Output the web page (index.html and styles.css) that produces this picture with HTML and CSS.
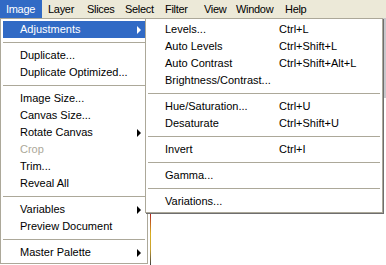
FILE: index.html
```html
<!DOCTYPE html>
<html lang="en">

<head>
  <meta charset="UTF-8">
  <title>Image menu</title>
  <link rel="stylesheet" href="styles.css">
</head>

<body>
  <div class="app">
    <div class="menubar">
      <span class="top-item active">Image</span>
      <span class="top-item">Layer</span>
      <span class="top-item">Slices</span>
      <span class="top-item">Select</span>
      <span class="top-item">Filter</span>
      <span class="top-item">View</span>
      <span class="top-item">Window</span>
      <span class="top-item">Help</span>
    </div>

    <div class="workspace">
      <div class="gutter"></div>
      <div class="canvas-edge"></div>
      <div class="canvas"></div>
      <div class="ruler"></div>
    </div>

    <!-- Image menu -->
    <div class="menu main-menu">
      <div class="item active has-sub">Adjustments</div>
      <div class="sep"></div>
      <div class="item">Duplicate...</div>
      <div class="item">Duplicate Optimized...</div>
      <div class="sep"></div>
      <div class="item">Image Size...</div>
      <div class="item">Canvas Size...</div>
      <div class="item has-sub">Rotate Canvas</div>
      <div class="item disabled">Crop</div>
      <div class="item">Trim...</div>
      <div class="item">Reveal All</div>
      <div class="sep"></div>
      <div class="item has-sub">Variables</div>
      <div class="item">Preview Document</div>
      <div class="sep"></div>
      <div class="item has-sub">Master Palette</div>
    </div>

    <!-- Adjustments submenu -->
    <div class="menu sub-menu">
      <div class="item"><span class="label">Levels...</span><span class="key">Ctrl+L</span></div>
      <div class="item"><span class="label">Auto Levels</span><span class="key">Ctrl+Shift+L</span></div>
      <div class="item"><span class="label">Auto Contrast</span><span class="key">Ctrl+Shift+Alt+L</span></div>
      <div class="item"><span class="label">Brightness/Contrast...</span></div>
      <div class="sep"></div>
      <div class="item"><span class="label">Hue/Saturation...</span><span class="key">Ctrl+U</span></div>
      <div class="item"><span class="label">Desaturate</span><span class="key">Ctrl+Shift+U</span></div>
      <div class="sep"></div>
      <div class="item"><span class="label">Invert</span><span class="key">Ctrl+I</span></div>
      <div class="sep"></div>
      <div class="item"><span class="label">Gamma...</span></div>
      <div class="sep"></div>
      <div class="item"><span class="label">Variations...</span></div>
    </div>
  </div>
</body>

</html>
```

FILE: styles.css
```css
body {
  margin: 0;
  font-family: "Liberation Sans", Arial, sans-serif;
  font-size: 11px;
  color: #000;
}

.app {
  position: relative;
  width: 386px;
  height: 265px;
  overflow: hidden;
  background: #fff;
}

.menubar {
  display: flex;
  height: 18px;
  background: #ece9d8;
}

.top-item {
  box-sizing: border-box;
  flex: none;
  padding: 0 6px;
  line-height: 18px;
  letter-spacing: -0.3px;
  white-space: nowrap;
}

.top-item:nth-child(1) { width: 42px; }
.top-item:nth-child(2) { width: 39px; }
.top-item:nth-child(3) { width: 38px; }
.top-item:nth-child(4) { width: 40px; }
.top-item:nth-child(5) { width: 39px; }
.top-item:nth-child(6) { width: 32px; }
.top-item:nth-child(7) { width: 49px; }

.top-item.active {
  background: #316ac5;
  color: #fff;
}

.workspace {
  display: flex;
  height: 247px;
}

.gutter {
  width: 150px;
}

.canvas-edge {
  width: 1px;
  margin-top: 195px;
  background: linear-gradient(#b02020, #d8b020 40%, #c8a030 70%, #404040);
}

.canvas {
  flex: 1;
}

.ruler {
  width: 3px;
  height: 80px;
  background: #c8c8cc;
}

/* drop-down menus */
.menu {
  position: absolute;
  top: 18px;
  box-sizing: border-box;
  background: #fff;
  border: 1px solid #aca899;
  padding: 2px;
}

.main-menu {
  left: 0;
  width: 148px;
}

.sub-menu {
  left: 145px;
  width: 238px;
  box-shadow: 1px 1px 0 #6e6e6e;
}

.item {
  position: relative;
  display: flex;
  height: 17px;
  line-height: 17px;
  padding-left: 17px;
  white-space: nowrap;
}

.item.active {
  background: #316ac5;
  color: #fff;
}

.item.disabled {
  color: #aca899;
}

.has-sub::after {
  content: "";
  position: absolute;
  right: 4px;
  top: 5px;
  border-left: 4px solid #000;
  border-top: 4px solid transparent;
  border-bottom: 4px solid transparent;
}

.item.active.has-sub::after {
  border-left-color: #fff;
}

.label {
  width: 114px;
}

.sep {
  height: 9px;
  position: relative;
}

.sep::before {
  content: "";
  position: absolute;
  left: 0;
  right: 0;
  top: 4px;
  height: 1px;
  background: #aca899;
}
```
